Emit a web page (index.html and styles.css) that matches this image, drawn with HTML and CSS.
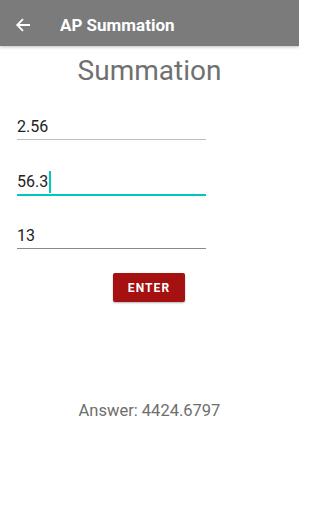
FILE: index.html
```html
<!DOCTYPE html>
<html>
<head>
<meta charset="utf-8">
<link rel="stylesheet" href="styles.css">
</head>
<body>
<div class="appbar">
  <svg class="back" width="16" height="16" viewBox="0 0 16 16"><path d="M15 8H2.5M8 2.2L2.2 8L8 13.8" fill="none" stroke="#fff" stroke-width="1.8"/></svg>
  <span class="apptitle">AP Summation</span>
</div>
<div class="content">
  <div class="title">Summation</div>
  <div class="fields">
    <div class="field"><span>2.56</span></div>
    <div class="field focused"><span>56.3</span><span class="caret"></span></div>
    <div class="field dark"><span>13</span></div>
  </div>
  <div class="btnrow"><button class="enter">ENTER</button></div>
  <div class="answer">Answer: 4424.6797</div>
</div>
</body>
</html>
```
FILE: styles.css
```css
html, body { margin: 0; padding: 0; background: #fff; }
body { font-family: Roboto, "Noto Sans", sans-serif; width: 299px; height: 512px; overflow: hidden; }
.appbar {
  height: 46px; background: #7b7b7b; display: flex; align-items: center;
  box-sizing: border-box; padding-top: 3px;
  box-shadow: 0 1px 3px rgba(0,0,0,0.25);
}
.back { margin-left: 15px; }
.apptitle { color: #fff; font-weight: 700; font-size: 17px; margin-left: 29px; }
.content { display: flex; flex-direction: column; }
.title { text-align: center; font-size: 28px; color: #707070; margin-top: 8px; line-height: 34px; }
.fields { display: flex; flex-direction: column; padding-left: 17px; margin-top: 26px; }
.field {
  width: 189px; height: 26px; border-bottom: 1px solid #bdbdbd;
  font-size: 16px; color: #222; display: flex; align-items: flex-end; padding-bottom: 2px; box-sizing: border-box;
  margin-bottom: 29px; line-height: 20px;
}
.field.focused { border-bottom: 2px solid #00c8bd; height: 27px; margin-bottom: 27px; }
.field.dark { border-bottom-color: #8a8a8a; }
.caret { width: 2px; height: 22px; background: #00c8bd; margin-left: 1px; margin-bottom: -1px; }
.btnrow { display: flex; justify-content: center; margin-top: -5px; }
.enter {
  width: 72px; height: 29px; background: #a51111; color: #fff; border: none; border-radius: 2px;
  font-family: Roboto, sans-serif; font-weight: 700; font-size: 12px; letter-spacing: 1.1px;
  box-shadow: 0 1px 2px rgba(0,0,0,0.3); padding: 0; margin-right: 1px;
}
.answer { text-align: center; font-size: 16.5px; color: #6e6e6e; margin-top: 99px; }
```
